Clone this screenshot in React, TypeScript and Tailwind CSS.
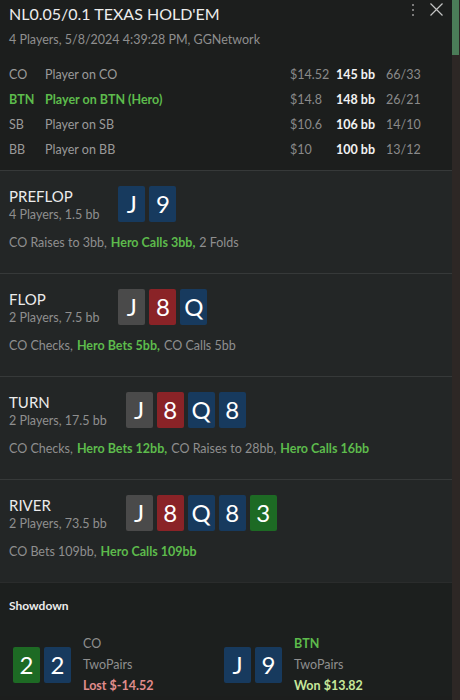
const players = [
  { pos: 'CO', name: 'Player on CO', stack: '$14.52', bb: '145 bb', stats: '66/33', hero: false },
  { pos: 'BTN', name: 'Player on BTN (Hero)', stack: '$14.8', bb: '148 bb', stats: '26/21', hero: true },
  { pos: 'SB', name: 'Player on SB', stack: '$10.6', bb: '106 bb', stats: '14/10', hero: false },
  { pos: 'BB', name: 'Player on BB', stack: '$10', bb: '100 bb', stats: '13/12', hero: false },
];

type Suit = 'b' | 'g' | 'r' | 'c';
type Act = { text: string; hero?: boolean };

const suitBg: Record<Suit, string> = {
  b: 'bg-[#173a5e]',
  g: 'bg-[#4a4a4a]',
  r: 'bg-[#8a2327]',
  c: 'bg-[#1d6a24]',
};

const Card = ({ rank, suit }: { rank: string; suit: Suit }) => (
  <div
    className={`flex h-[36px] w-[27px] items-center justify-center rounded-[2px] text-[24px] leading-none text-white ${suitBg[suit]}`}
  >
    {rank}
  </div>
);

const streets: { name: string; info: string; cards: [string, Suit][]; actions: Act[] }[] = [
  {
    name: 'PREFLOP',
    info: '4 Players, 1.5 bb',
    cards: [['J', 'b'], ['9', 'b']],
    actions: [{ text: 'CO Raises to 3bb,' }, { text: 'Hero Calls 3bb,', hero: true }, { text: '2 Folds' }],
  },
  {
    name: 'FLOP',
    info: '2 Players, 7.5 bb',
    cards: [['J', 'g'], ['8', 'r'], ['Q', 'b']],
    actions: [{ text: 'CO Checks,' }, { text: 'Hero Bets 5bb,', hero: true }, { text: 'CO Calls 5bb' }],
  },
  {
    name: 'TURN',
    info: '2 Players, 17.5 bb',
    cards: [['J', 'g'], ['8', 'r'], ['Q', 'b'], ['8', 'b']],
    actions: [
      { text: 'CO Checks,' },
      { text: 'Hero Bets 12bb,', hero: true },
      { text: 'CO Raises to 28bb,' },
      { text: 'Hero Calls 16bb', hero: true },
    ],
  },
  {
    name: 'RIVER',
    info: '2 Players, 73.5 bb',
    cards: [['J', 'g'], ['8', 'r'], ['Q', 'b'], ['8', 'b'], ['3', 'c']],
    actions: [{ text: 'CO Bets 109bb,' }, { text: 'Hero Calls 109bb', hero: true }],
  },
];

export default function App() {
  return (
    <div
      className="flex h-[700px] w-[460px] overflow-hidden bg-[#1c1e1d]"
      style={{ fontFamily: 'Lato, "Noto Sans", sans-serif' }}
    >
      <div className="relative flex-1">
        {/* header */}
        <div className="px-[9px] pt-[3px] pb-[7px]">
          <div className="text-[16px] leading-[22px] text-[#ececec]">NL0.05/0.1 TEXAS HOLD'EM</div>
          <div className="mt-[6px] text-[12.5px] leading-[18px] text-[#8f8f8f]">
            4 Players, 5/8/2024 4:39:28 PM, GGNetwork
          </div>
          <div className="mt-[14px] grid grid-cols-[36px_245px_46px_50px_auto] text-[12.5px]">
            {players.map((p) => (
              <div key={p.pos} className="contents">
                <div className={`flex h-[25px] items-center ${p.hero ? 'font-bold text-[#5dbb4c]' : 'text-[#9a9a9a]'}`}>
                  {p.pos}
                </div>
                <div className={`flex h-[25px] items-center ${p.hero ? 'font-bold text-[#5dbb4c]' : 'text-[#9a9a9a]'}`}>
                  {p.name}
                </div>
                <div className="flex h-[25px] items-center text-[#8a8a8a]">{p.stack}</div>
                <div className="flex h-[25px] items-center font-bold text-[#f2f2f2]">{p.bb}</div>
                <div className="flex h-[25px] items-center text-[#8a8a8a]">{p.stats}</div>
              </div>
            ))}
          </div>
        </div>

        {/* menu + close */}
        <div className="absolute top-[3px] right-[9px] flex items-start gap-[16px]">
          <div className="mt-[1px] flex flex-col gap-[3px]">
            <span className="h-[2px] w-[2px] rounded-full bg-[#9a9a9a]" />
            <span className="h-[2px] w-[2px] rounded-full bg-[#9a9a9a]" />
            <span className="h-[2px] w-[2px] rounded-full bg-[#9a9a9a]" />
          </div>
          <svg width="13" height="13" viewBox="0 0 13 13" className="text-[#c4c4c4]">
            <path d="M0.5 0.5 L12.5 12.5 M12.5 0.5 L0.5 12.5" stroke="currentColor" strokeWidth="1.2" />
          </svg>
        </div>

        {/* streets */}
        {streets.map((s) => (
          <div key={s.name} className="border-t border-[#363939] bg-[#232626] px-[9px] pt-[15px] pb-[21px]">
            <div className="flex items-start gap-[19px]">
              <div>
                <div className="text-[15px] leading-[20px] text-[#ececec]">{s.name}</div>
                <div className="text-[12.5px] leading-[18px] text-[#8f8f8f]">{s.info}</div>
              </div>
              <div className="flex gap-[4px]">
                {s.cards.map(([r, su], i) => (
                  <Card key={i} rank={r} suit={su} />
                ))}
              </div>
            </div>
            <div className="mt-[10px] flex gap-[4px] text-[12.5px] leading-[18px] text-[#8f8f8f]">
              {s.actions.map((a, i) => (
                <span key={i} className={a.hero ? 'font-bold text-[#5dbb4c]' : ''}>
                  {a.text}
                </span>
              ))}
            </div>
          </div>
        ))}

        {/* showdown */}
        <div className="border-t border-[#2a2c2c] bg-[#1c1f1e] px-[9px] pt-[14px]">
          <div className="text-[12px] leading-[18px] font-bold text-[#ececec]">Showdown</div>
          <div className="mt-[18px] flex">
            <div className="flex w-[215px] items-center gap-[12px] pl-[4px]">
              <div className="flex gap-[4px]">
                <Card rank="2" suit="c" />
                <Card rank="2" suit="b" />
              </div>
              <div className="text-[12.5px] leading-[21px]">
                <div className="text-[#8f8f8f]">CO</div>
                <div className="text-[#8f8f8f]">TwoPairs</div>
                <div className="font-bold text-[#e08c8c]">Lost $-14.52</div>
              </div>
            </div>
            <div className="flex items-center gap-[12px]">
              <div className="flex gap-[4px]">
                <Card rank="J" suit="b" />
                <Card rank="9" suit="b" />
              </div>
              <div className="text-[12.5px] leading-[21px]">
                <div className="font-bold text-[#5dbb4c]">BTN</div>
                <div className="text-[#8f8f8f]">TwoPairs</div>
                <div className="font-bold text-[#c7e79a]">Won $13.82</div>
              </div>
            </div>
          </div>
        </div>
      </div>

      {/* scrollbar */}
      <div className="flex w-[8px] flex-col bg-[#2d2725]">
        <div className="h-[55px] w-[7px] bg-[#4b7c58]" />
      </div>
    </div>
  );
}
